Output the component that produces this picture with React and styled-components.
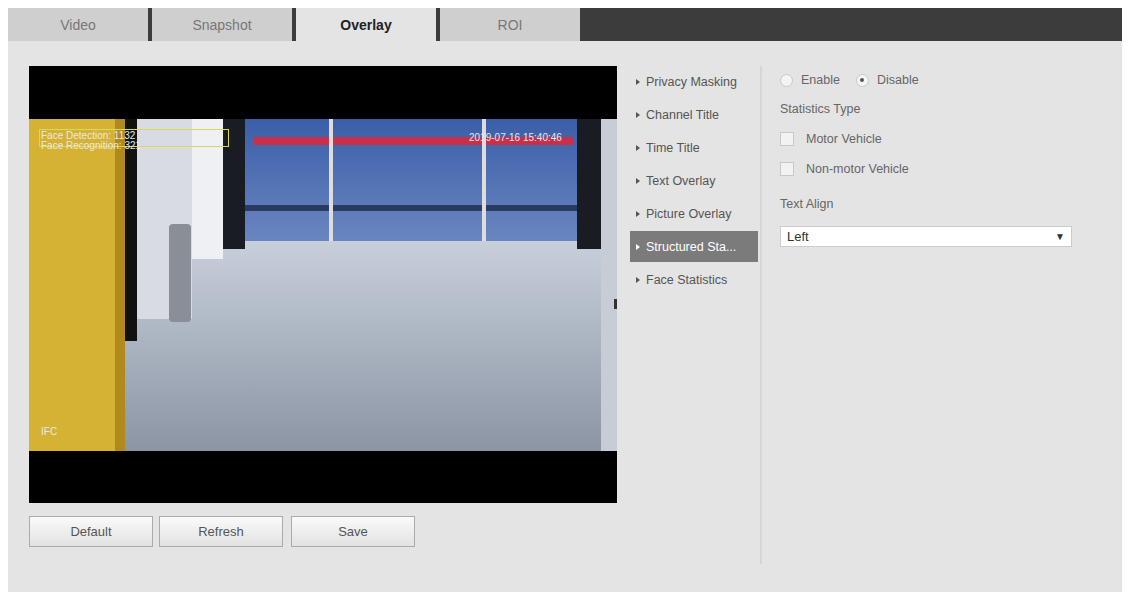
import styled, { createGlobalStyle } from "styled-components";

const Global = createGlobalStyle`
  html, body { margin: 0; background: #fff; }
  body { font-family: "Liberation Sans", Arial, sans-serif; }
`;

const Page = styled.div`
  width: 1137px;
  height: 598px;
  padding: 8px 0 0 8px;
  box-sizing: border-box;
`;

const Frame = styled.div`
  background: #e4e4e4;
  width: 1114px;
  height: 584px;
  display: flex;
  flex-direction: column;
`;

const TabBar = styled.div`
  display: flex;
  height: 33px;
  background: #3c3c3c;
`;

const Tab = styled.div`
  width: 140px;
  margin-right: 4px;
  display: flex;
  align-items: center;
  justify-content: center;
  font-size: 14px;
  color: ${p => (p.active ? "#222" : "#777")};
  font-weight: ${p => (p.active ? "bold" : "normal")};
  background: ${p => (p.active ? "#e4e4e4" : "#cfcfcf")};
`;

const Body = styled.div`
  display: flex;
  padding: 25px 0 0 21px;
`;

const Left = styled.div`
  width: 588px;
  display: flex;
  flex-direction: column;
`;

const Video = styled.div`
  height: 437px;
  background: #000;
  display: flex;
  flex-direction: column;
  justify-content: center;
`;

const Scene = styled.div`
  position: relative;
  height: 332px;
`;

const Osd = styled.div`
  position: absolute;
  color: #e8e8e8;
  font-size: 10px;
  line-height: 10px;
  left: ${p => p.x}px;
  top: ${p => p.y}px;
`;

const FaceBox = styled.div`
  position: absolute;
  left: 10px;
  top: 10px;
  width: 188px;
  height: 16px;
  border: 1px solid #d8d85a;
`;

const Buttons = styled.div`
  display: flex;
  gap: 6px;
  margin-top: 13px;
`;

const Btn = styled.button`
  width: 124px;
  height: 31px;
  margin-right: ${p => p.gap || 0}px;
  border: 1px solid #aaa;
  background: linear-gradient(#fafafa, #e2e2e2);
  font-family: inherit;
  font-size: 13px;
  color: #555;
`;

const Menu = styled.div`
  width: 130px;
  margin-left: 13px;
  display: flex;
  flex-direction: column;
  border-right: 2px solid #d6d6d6;
  height: 498px;
`;

const MenuItem = styled.div`
  height: 31px;
  margin-bottom: 2px;
  width: 128px;
  display: flex;
  align-items: center;
  gap: 6px;
  padding-left: 6px;
  box-sizing: border-box;
  font-size: 12.5px;
  white-space: nowrap;
  color: ${p => (p.active ? "#fff" : "#555")};
  background: ${p => (p.active ? "#7b7b7b" : "transparent")};
  &::before {
    content: "";
    border-left: 4px solid ${p => (p.active ? "#fff" : "#555")};
    border-top: 3px solid transparent;
    border-bottom: 3px solid transparent;
  }
`;

const Panel = styled.div`
  margin-left: 18px;
  display: flex;
  flex-direction: column;
  font-size: 12.5px;
  color: #666;
`;

const Row = styled.div`
  display: flex;
  align-items: center;
  gap: 8px;
  height: ${p => p.h || 30}px;
`;

const Radio = styled.span`
  width: 11px;
  height: 11px;
  border-radius: 50%;
  border: 1px solid #c8c8c8;
  background: #f4f4f4;
  display: flex;
  align-items: center;
  justify-content: center;
  margin-left: ${p => p.ml || 0}px;
  &::after {
    content: "";
    width: 4px;
    height: 4px;
    border-radius: 50%;
    background: ${p => (p.checked ? "#555" : "transparent")};
  }
`;

const Check = styled.span`
  width: 12px;
  height: 12px;
  border: 1px solid #c8c8c8;
  background: #f2f2f2;
  margin-right: 4px;
`;

const Select = styled.div`
  width: 278px;
  height: 19px;
  background: #fff;
  border: 1px solid #ccc;
  display: flex;
  align-items: center;
  justify-content: space-between;
  padding: 0 6px;
  color: #333;
  font-size: 13px;
  margin-top: 2px;
`;

function SceneArt() {
  return (
    <svg width="588" height="332" viewBox="0 0 588 332" style={{ display: "block" }}>
      <defs>
        <linearGradient id="floor" x1="0" y1="0" x2="0" y2="1">
          <stop offset="0" stopColor="#c8d0dc" />
          <stop offset="1" stopColor="#8c95a4" />
        </linearGradient>
        <linearGradient id="win" x1="0" y1="0" x2="0" y2="1">
          <stop offset="0" stopColor="#3a5ea8" />
          <stop offset="1" stopColor="#6a86c0" />
        </linearGradient>
      </defs>
      <rect width="588" height="332" fill="#b9c2d2" />
      <rect x="0" y="120" width="588" height="212" fill="url(#floor)" />
      <rect x="215" y="0" width="340" height="122" fill="url(#win)" />
      <rect x="225" y="18" width="320" height="8" fill="#c8304a" />
      <rect x="215" y="86" width="340" height="6" fill="#2a3a60" />
      <rect x="300" y="0" width="4" height="122" fill="#ddd" />
      <rect x="453" y="0" width="4" height="122" fill="#ddd" />
      <rect x="194" y="0" width="22" height="130" fill="#1a1c24" />
      <rect x="548" y="0" width="24" height="130" fill="#1a1c24" />
      <rect x="572" y="0" width="16" height="332" fill="#c8ccd6" />
      <rect x="68" y="0" width="40" height="222" fill="#111" />
      <rect x="108" y="0" width="55" height="200" fill="#d8dce2" />
      <rect x="163" y="0" width="31" height="140" fill="#eef0f4" />
      <rect x="140" y="105" width="22" height="98" rx="4" fill="#8a8e96" />
      <path d="M0 0 H40 L90 0 V332 H0 Z" fill="#d6b234" />
      <rect x="86" y="0" width="10" height="332" fill="#b08a1c" />
      <rect x="585" y="180" width="3" height="10" fill="#333" />
    </svg>
  );
}

export default function App() {
  return (
    <Page>
      <Global />
      <Frame>
        <TabBar>
          <Tab>Video</Tab>
          <Tab>Snapshot</Tab>
          <Tab active>Overlay</Tab>
          <Tab>ROI</Tab>
        </TabBar>
        <Body>
          <Left>
            <Video>
              <Scene>
                <SceneArt />
                <FaceBox />
                <Osd x={12} y={12}>Face Detection: 1132<br />Face Recognition: 321</Osd>
                <Osd x={440} y={14}>2019-07-16 15:40:46</Osd>
                <Osd x={12} y={308}>IFC</Osd>
              </Scene>
            </Video>
            <Buttons>
              <Btn>Default</Btn>
              <Btn gap={2}>Refresh</Btn>
              <Btn>Save</Btn>
            </Buttons>
          </Left>
          <Menu>
            <MenuItem>Privacy Masking</MenuItem>
            <MenuItem>Channel Title</MenuItem>
            <MenuItem>Time Title</MenuItem>
            <MenuItem>Text Overlay</MenuItem>
            <MenuItem>Picture Overlay</MenuItem>
            <MenuItem active>Structured Sta...</MenuItem>
            <MenuItem>Face Statistics</MenuItem>
          </Menu>
          <Panel>
            <Row h={28}>
              <Radio /> Enable <Radio checked ml={8} /> Disable
            </Row>
            <Row h={30}>Statistics Type</Row>
            <Row h={30}><Check />Motor Vehicle</Row>
            <Row h={30}><Check />Non-motor Vehicle</Row>
            <Row h={40}>Text Align</Row>
            <Select><span>Left</span><span style={{ fontSize: 10 }}>▼</span></Select>
          </Panel>
        </Body>
      </Frame>
    </Page>
  );
}
